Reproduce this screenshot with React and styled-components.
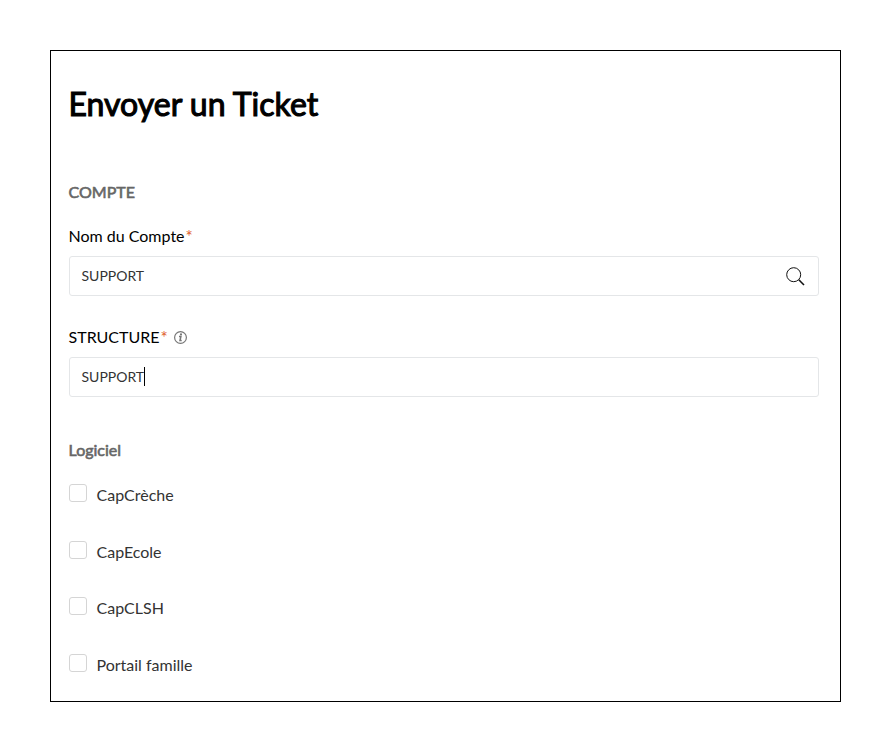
import styled, { createGlobalStyle } from "styled-components"

const GlobalStyle = createGlobalStyle`
   * {
     box-sizing: border-box;
   }
   body {
     margin: 0;
     background-color: white;
     font-family: Lato, "Liberation Sans", sans-serif;
     font-size: 16px;
     color: black;
   }
`;

const Container = styled.form`
   width: 791px;
   height: 652px;
   margin: 50px;
   padding: 33px 21px 0 18px;
   border: 1px solid black;
   overflow: hidden;
`;

const Title = styled.h1`
   margin: 0 0 58px -0.5px;
   font-size: 32px;
   font-weight: 400;
   line-height: 40px;
   -webkit-text-stroke: 1.1px black;
`;

const SectionTitle = styled.h2`
   margin: 0 0 24px -0.5px;
   font-size: 16px;
   font-weight: 400;
   line-height: 20px;
   color: #666;
   -webkit-text-stroke: 0.6px #666;
`;

const Field = styled.div`
   margin-bottom: ${props => props.$last ? "43px" : "31px"};
`;

const Label = styled.label`
   display: flex;
   align-items: center;
   height: 20px;
   margin: 0 0 10px -0.5px;
   line-height: 20px;
`;

const Required = styled.span`
   margin-left: 1px;
   padding-top: 2px;
   font-size: 17px;
   color: #e0602c;
`;

const InputBox = styled.div`
   display: flex;
   align-items: center;
   height: 40px;
   padding: 0 13.5px 0 11.5px;
   border: 1px solid #e4e6e8;
   border-radius: 3px;
   font-size: 14px;
   color: #333;
`;

const Value = styled.span`
   padding-bottom: 1px;
`;

const Caret = styled.span`
   width: 1px;
   height: 19px;
   margin-left: -0.5px;
   margin-bottom: 2px;
   background-color: black;
`;

const InfoSvg = styled.svg`
   margin-left: 6px;
`;

const SearchSvg = styled.svg`
   margin-left: auto;
`;

const List = styled.ul`
   margin: 0;
   padding: 0;
   list-style: none;
`;

const ListItem = styled.li`
   display: flex;
   height: 56.67px;
   line-height: 20px;
   color: #333;
`;

const Checkbox = styled.span`
   width: 18px;
   height: 18px;
   margin-right: 9.5px;
   border: 1px solid #d5d5d5;
   border-radius: 3px;
`;

const Name = styled.span`
   margin-top: 1px;
`;

const InfoIcon = () => (
  <InfoSvg width="13" height="13" viewBox="0 0 13 13" fill="none" stroke="#777">
    <circle cx="6.5" cy="6.5" r="5.9" strokeWidth="1.2" />
    <circle cx="7" cy="3.4" r="1.1" fill="#777" stroke="none" />
    <path d="M5 5.5h1.9L6 9.6h1.7" strokeWidth="1.5" />
  </InfoSvg>
)

const SearchIcon = () => (
  <SearchSvg width="19" height="19" viewBox="0 0 19 19" fill="none" stroke="#111">
    <circle cx="7.7" cy="7.7" r="7" strokeWidth="1" />
    <path d="M12.8 12.8l5.2 5.2" strokeWidth="1.6" />
  </SearchSvg>
)

const products = ["CapCrèche", "CapEcole", "CapCLSH", "Portail famille"];

const App = () => {
  return (
    <>
      <GlobalStyle />
      <Container>
        <Title>Envoyer un Ticket</Title>
        <SectionTitle>COMPTE</SectionTitle>
        <Field>
          <Label>Nom du Compte<Required>*</Required></Label>
          <InputBox><Value>SUPPORT</Value><SearchIcon /></InputBox>
        </Field>
        <Field $last>
          <Label>STRUCTURE<Required>*</Required><InfoIcon /></Label>
          <InputBox><Value>SUPPORT</Value><Caret /></InputBox>
        </Field>
        <SectionTitle>Logiciel</SectionTitle>
        <List>
          {products.map(product => (
            <ListItem key={product}>
              <Checkbox />
              <Name>{product}</Name>
            </ListItem>
          ))}
        </List>
      </Container>
    </>
  )
}

export default App
